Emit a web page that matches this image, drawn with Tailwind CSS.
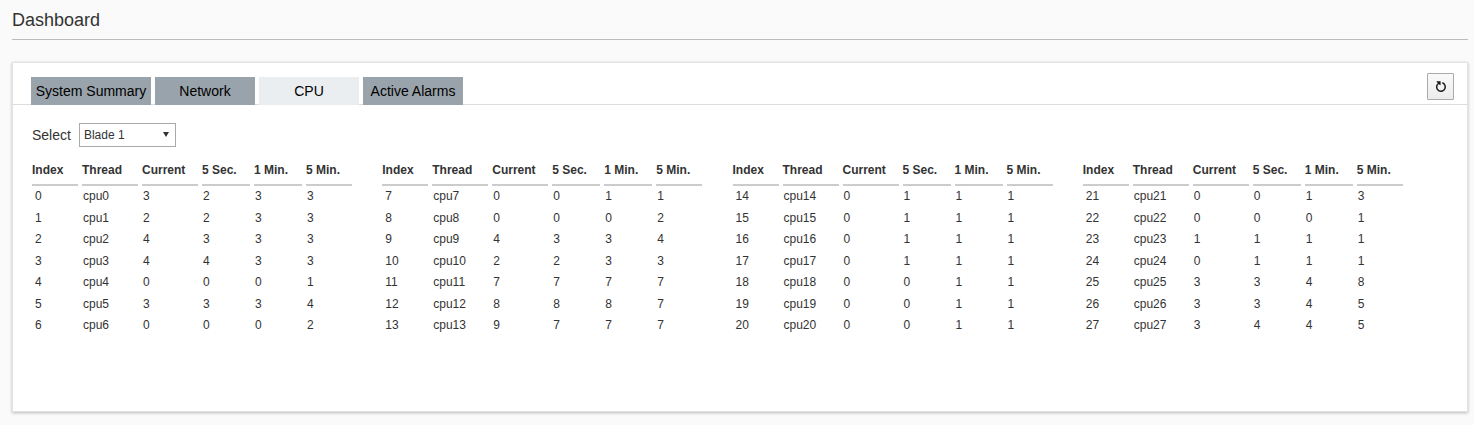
<!DOCTYPE html>
<html lang="en">
<head>
<meta charset="utf-8">
<title>Dashboard</title>
<script src="https://cdn.jsdelivr.net/npm/@tailwindcss/browser@4"></script>
</head>
<body class="flex min-h-screen flex-col bg-[#fafafa] pr-[6px] pb-[13px] pl-3 font-['Liberation_Sans',Arial,sans-serif] text-[#333]">
<header class="border-b border-[#bbb] pt-2 pb-[7px]">
  <h1 class="text-lg leading-6">Dashboard</h1>
</header>
<main class="mt-[22px] flex-1 border border-[#dfe3e6] bg-white shadow-[0_1px_3px_rgba(0,0,0,0.25)]">
  <div class="flex items-end justify-between border-b border-[#ddd] pt-[10px] pr-[13px] pl-[18px]">
    <div role="tablist" class="-mb-px flex gap-1">
      <button type="button" role="tab" aria-selected="false" class="h-7 w-[120px] bg-[#99a3ab] text-sm whitespace-nowrap text-black">System Summary</button>
      <button type="button" role="tab" aria-selected="false" class="h-7 w-[100px] bg-[#99a3ab] text-sm whitespace-nowrap text-black">Network</button>
      <button type="button" role="tab" aria-selected="true" class="h-7 w-[100px] bg-[#ebeef1] text-sm whitespace-nowrap text-black">CPU</button>
      <button type="button" role="tab" aria-selected="false" class="h-7 w-[100px] bg-[#99a3ab] text-sm whitespace-nowrap text-black">Active Alarms</button>
    </div>
    <button type="button" aria-label="Refresh" class="mb-1 flex h-[27px] w-[27px] items-center justify-center rounded-[1px] border border-[#aaa] bg-linear-to-b from-[#fafafa] to-[#ececec]">
      <svg width="13" height="13" viewBox="0 0 13 13" fill="none" stroke="#1a1a1a" stroke-width="1.5" aria-hidden="true">
        <path d="M8.3 2.8A4.3 4.3 0 1 1 3.6 4.2"/>
        <path d="M2.4 1.2H6.6V5.2L5.2 4.6L3.4 4.6L3.6 3Z" fill="#1a1a1a" stroke="none"/>
      </svg>
    </button>
  </div>
  <div class="flex items-center gap-2 pt-[18px] pl-[19px]">
    <label for="blade" class="text-sm">Select</label>
    <div class="relative">
      <select id="blade" class="block h-6 w-[97px] appearance-none border border-[#aaa] bg-white pl-1 text-xs text-[#333]"><option>Blade 1</option></select>
      <svg class="pointer-events-none absolute top-[9px] right-[7px]" width="6" height="5" viewBox="0 0 6 5" aria-hidden="true"><path d="M0 0H6L3 5Z" fill="#333"/></svg>
    </div>
  </div>
  <div id="cpus" class="grid grid-cols-4 pt-3 pr-[38px] pl-[15px]"></div>
</main>
<script>
// Each row: current, 5 second, 1 minute and 5 minute load; the thread number is the row's position.
const load = ["3233","2233","4333","4433","0001","3334","0002",
  "0011","0002","4334","2233","7777","8887","9777",
  "0111","0111","0111","0111","0011","0011","0011",
  "0013","0001","1111","0111","3348","3345","3445"];
const head = `<thead><tr>
  <th scope="col" class="h-[27px] w-[46px] border-b-2 border-[#ccc] pb-1 text-left">Index</th>
  <th scope="col" class="w-[56px] border-b-2 border-[#ccc] pb-1 text-left">Thread</th>
  <th scope="col" class="w-[56px] border-b-2 border-[#ccc] pb-1 text-left">Current</th>
  <th scope="col" class="w-[48px] border-b-2 border-[#ccc] pb-1 text-left">5 Sec.</th>
  <th scope="col" class="w-[48px] border-b-2 border-[#ccc] pb-1 text-left">1 Min.</th>
  <th scope="col" class="w-[46px] border-b-2 border-[#ccc] pb-1 text-left">5 Min.</th>
</tr></thead>`;
let html = "";
for (let t = 0; t < 4; t++) {
  let rows = "";
  for (let i = t * 7; i < t * 7 + 7; i++) {
    rows += `<tr class="h-[21px] even:h-[22px]"><td class="pb-px pl-[3px]">${i}</td><td class="pb-px pl-px">cpu${i}</td>` +
      [...load[i]].map(v => `<td class="pb-px pl-px">${v}</td>`).join("") + "</tr>";
  }
  html += `<table class="w-[328px] table-fixed border-separate border-spacing-x-1 border-spacing-y-0 self-start text-xs">${head}<tbody>${rows}</tbody></table>`;
}
document.getElementById("cpus").innerHTML = html;
</script>
</body>
</html>
